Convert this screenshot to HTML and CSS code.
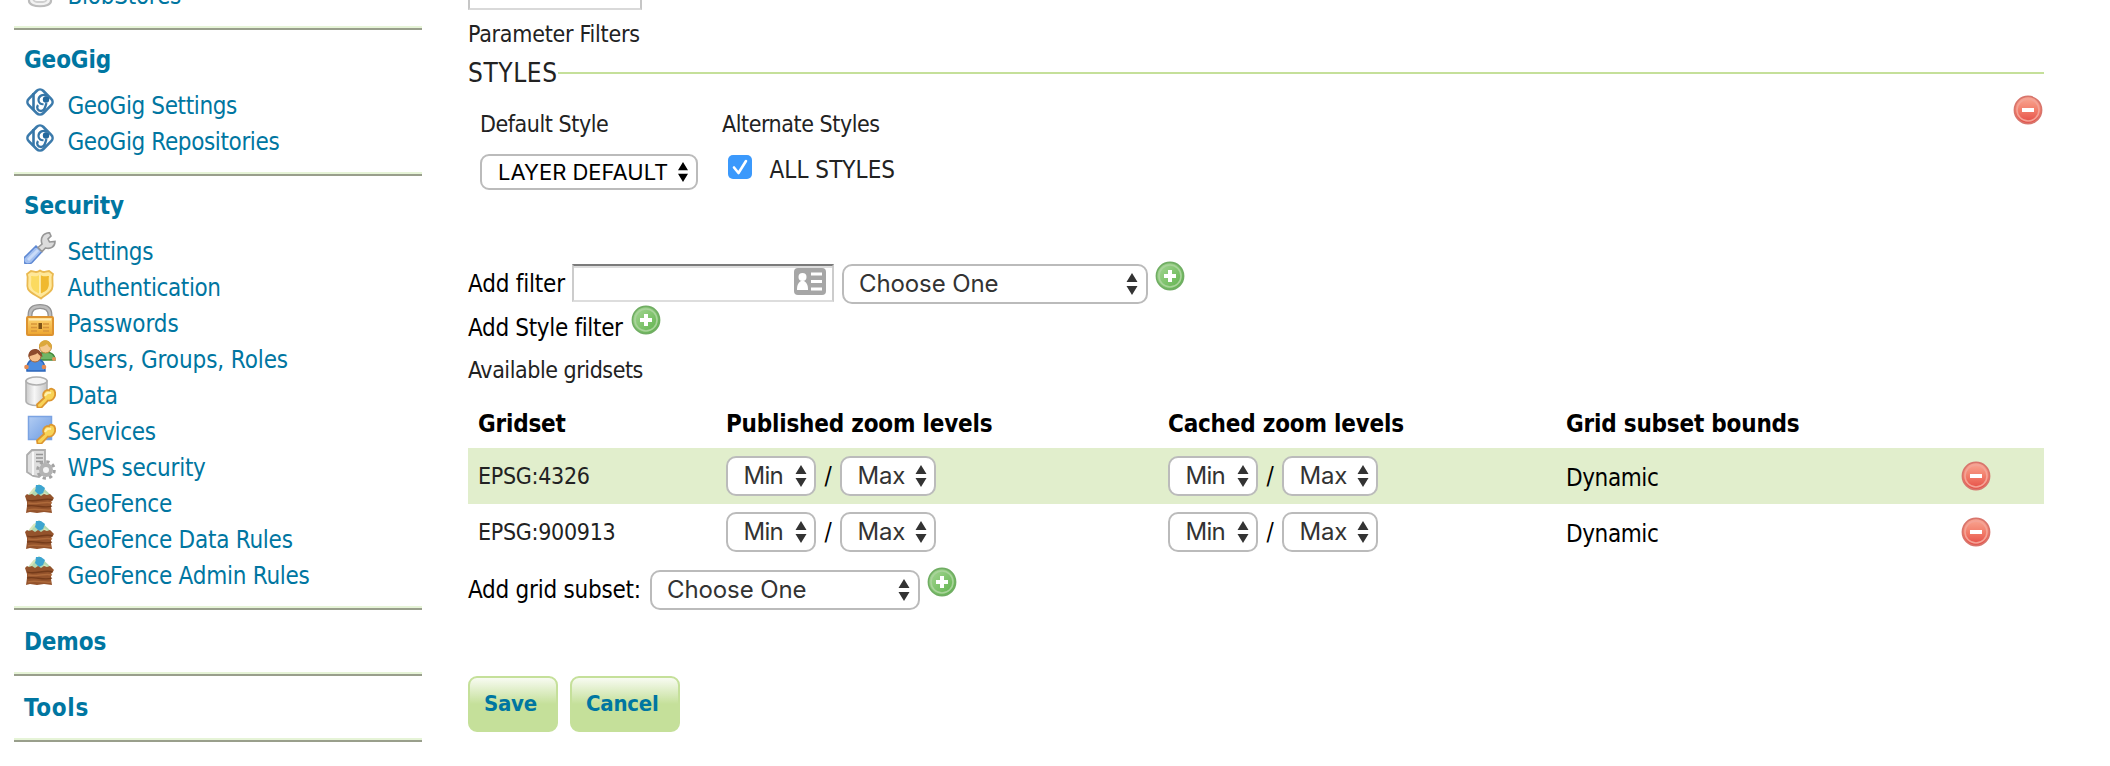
FILE: index.html
```
<!DOCTYPE html>
<html lang="en">
<head>
<meta charset="utf-8">
<title>GeoServer: Edit Layer</title>
<link rel="stylesheet" href="styles.css">
</head>
<body>
<svg class="defs" width="0" height="0" aria-hidden="true">
  <defs>
    <linearGradient id="gRed" x1="0" y1="0" x2="0" y2="1"><stop offset="0" stop-color="#f9a995"/><stop offset=".5" stop-color="#f27e6b"/><stop offset="1" stop-color="#e44a44"/></linearGradient>
    <linearGradient id="gGreen" x1="0" y1="0" x2="1" y2="1"><stop offset="0" stop-color="#a9d998"/><stop offset="1" stop-color="#5bb048"/></linearGradient>
    <linearGradient id="gGold" x1="0" y1="0" x2="0" y2="1"><stop offset="0" stop-color="#fdd573"/><stop offset="1" stop-color="#eda52f"/></linearGradient>
    <linearGradient id="gGrey" x1="0" y1="0" x2="1" y2="0"><stop offset="0" stop-color="#c9c9c9"/><stop offset=".4" stop-color="#f7f7f7"/><stop offset="1" stop-color="#c4c4c4"/></linearGradient>
    <linearGradient id="gBlue" x1="0" y1="0" x2="1" y2="1"><stop offset="0" stop-color="#b3cdf3"/><stop offset="1" stop-color="#6c9be2"/></linearGradient>
    <symbol id="minus" viewBox="0 0 32 32"><circle cx="16" cy="16" r="13.6" fill="url(#gRed)" stroke="#d8756c" stroke-width="1.6"/><circle cx="16" cy="16" r="11" fill="none" stroke="#f4a396" stroke-width="1.6"/><rect x="10" y="14" width="12" height="4" fill="#fff"/></symbol>
    <symbol id="plus" viewBox="0 0 32 32"><circle cx="16" cy="16" r="13.6" fill="url(#gGreen)" stroke="#70ad63" stroke-width="1.6"/><circle cx="16" cy="16" r="11" fill="none" stroke="#a9d39b" stroke-width="1.6"/><path d="M10 14h4v-4h4v4h4v4h-4v4h-4v-4h-4z" fill="#fff"/></symbol>
    <symbol id="geogig" viewBox="0 0 32 32"><rect x="5.800" y="5.800" width="20.400" height="20.400" rx="4.500" transform="rotate(45 16 16)" fill="#fff" stroke="#3b7aab" stroke-width="2.600"/><path d="M9.500 7v17" fill="none" stroke="#3575a7" stroke-width="2.600"/><path d="M23 10c-3.500-2.500-8.500-.5-8.500 4 0 3 2.500 4.500 5 4.200" fill="none" stroke="#3575a7" stroke-width="2.200"/><path d="M14 19c-2 3 0 6 3 6 4 0 4-4 5.500-8" fill="none" stroke="#3575a7" stroke-width="2.300"/><circle cx="22" cy="13.500" r="3.200" fill="#24689d"/></symbol>
    <symbol id="wrench" viewBox="0 0 32 32"><path d="M0 26 12 14l6 5.500L8 30.500c-3 2.500-10 2.500-8-4.500z" fill="#a3c0f0" stroke="#5f89d3" stroke-width="1.600"/><path d="M4 28 14 18" stroke="#c9dbf8" stroke-width="3"/><path d="M14 15.500l4-3.500c-2-6 1-11 7.500-11.300L27 4l-3 3 1.500 3 5.500-.5c0 5-4 8-9.500 6.500L18 19.500z" fill="#dcdcdc" stroke="#979797" stroke-width="1.600"/></symbol>
    <symbol id="shield" viewBox="0 0 32 32"><path d="M16 2.500c2 1.500 4 2 6 1l3-.5 4 3c-2 5 1 10-1 15-2 4-7 6-11 9.500C12 27 6 25 4 21 2 16 5 11 3 6l4-3 3 .5c2 1 4 .5 6-1z" fill="#ffe89a" stroke="#eab950" stroke-width="1.800"/><path d="M16 7c4 2 5 1 9 1-1 5 1 8-1 12-1 3-5 4-8 6z" fill="#f0b92f"/><path d="M16 7c-4 2-5 1-9 1 1 5-1 8 1 12 1 3 5 4 8 6z" fill="#fbda60"/><path d="M16 7v19" stroke="#fff3c0" stroke-width="1.500"/></symbol>
    <symbol id="lock" viewBox="0 0 32 32"><path d="M6 15v-4C6 5 10 2.500 16 2.500S26 5 26 11v4" fill="none" stroke="#929292" stroke-width="5"/><path d="M6 15v-4C6 5 10 2.500 16 2.500S26 5 26 11v4" fill="none" stroke="#bdbdbd" stroke-width="2.400"/><rect x="3" y="13" width="26" height="18" rx="1" fill="url(#gGold)" stroke="#dd9330" stroke-width="2"/><path d="M5 15.500h22" stroke="#ffebb5" stroke-width="2"/><path d="M7 20h6M7 23.500h6M7 27h6M19 20h6M19 23.500h6M19 27h6" stroke="#d8953a" stroke-width="1.500"/><rect x="14.500" y="19" width="3.500" height="6" fill="#7e5318"/></symbol>
    <symbol id="users" viewBox="0 0 32 32"><path d="M14 20c0-6 4-8 8-8s9 2 9 8z" fill="#6fb565" stroke="#40883a" stroke-width="1.500"/><circle cx="21.500" cy="7" r="6" fill="#f6c98e" stroke="#c08839"/><path d="M15 7C15-2 28-2 28 8c-3 0-4-3-5-4-2 2-5 3-8 3z" fill="#dca83b"/><circle cx="30" cy="19" r="2" fill="#e5955a"/><path d="M3 31c-1-9 4-12 9-12s9 3 9 12z" fill="#4c8de0" stroke="#2b66bb" stroke-width="1.500"/><circle cx="11" cy="16" r="6" fill="#f6c08b" stroke="#a5653a"/><path d="M4.500 17c-1-10 13-11 14 0-3-1-4-3-5-4-2 2-6 2-9 4z" fill="#8e4b2d"/><circle cx="2.500" cy="27" r="2.300" fill="#e58a50"/><circle cx="20" cy="27" r="2.300" fill="#e58a50"/></symbol>
    <symbol id="key" viewBox="0 0 32 32"><path d="M13 28.500 20 22c-2-4 0-7 3-8l2 .5c0-3 6-2 6 2 1 5-3 9-7 8l-6.500 7-4 .2z" fill="#f8d357" stroke="#dc9630" stroke-width="1.800"/><path d="M21 20c1-3 3-4 6-3" fill="none" stroke="#fff0ac" stroke-width="2"/></symbol>
    <symbol id="data" viewBox="0 0 32 32"><path d="M2 5v20c0 6 21 6 21 0V5z" fill="url(#gGrey)" stroke="#b0b0b0" stroke-width="1.600"/><ellipse cx="12.500" cy="5" rx="10.500" ry="4" fill="#f4f4f4" stroke="#b0b0b0" stroke-width="1.600"/><use href="#key"/></symbol>
    <symbol id="services" viewBox="0 0 32 32"><rect x="4.500" y="4.500" width="23" height="23" fill="url(#gBlue)" stroke="#7ba3e2" stroke-width="1.500"/><use href="#key"/></symbol>
    <symbol id="wps" viewBox="0 0 32 32"><path d="M3 7 8 2h13v22L15 29 9 28 3 24z" fill="#dedede" stroke="#adadad" stroke-width="1.800"/><path d="M9 4v23" stroke="#f8f8f8" stroke-width="2"/><path d="M12 6.500h7M12 10h7M12 13.500h7" stroke="#959595" stroke-width="1.600"/><circle cx="22" cy="22" r="8.300" fill="none" stroke="#a3a3a3" stroke-width="3" stroke-dasharray="3.260"/><circle cx="22" cy="22" r="5" fill="#f4f4f4" stroke="#b3b3b3" stroke-width="4"/></symbol>
    <symbol id="fence" viewBox="0 0 32 32"><path d="M15 0 28 12H3z" fill="#b3d8b0"/><path d="M12 1h5l4 3-2 5-4 2-4-4z" fill="#3da5d0"/><path d="M6 10 11 4M20 9l3 2" stroke="#d7e6bb" stroke-width="2"/><path d="M1 12l2-2 2 1 3-1 3 2 3-2 3 2 3-2 3 1 3-1 4 4-3 4v5l1 6-8-1-7 1-7-1-4 1 1-7V18z" fill="#94532c"/><path d="M3 16c8 3 18-3 26 0M3 22c8-2 17 3 25 0" fill="none" stroke="#743b1a" stroke-width="1.300"/><path d="M4 19c8 2 17-2 24 0M4 26c8-2 17 1 23 0" fill="none" stroke="#ae6a3b" stroke-width="1.500"/></symbol>
    <symbol id="blob" viewBox="0 0 32 32"><path d="M5 5v20c0 7 22 7 22 0V5z" fill="#f2f2f2" stroke="#bcbcbc" stroke-width="2.200"/><rect x="9" y="14" width="14" height="12" rx="4" fill="#fafafa" stroke="#cfcfcf" stroke-width="1.800"/></symbol>
    <symbol id="card" viewBox="0 0 32 27"><rect width="32" height="27" rx="4" fill="#a6a6a6"/><circle cx="8.500" cy="9" r="4" fill="#fff"/><path d="M3 22c0-5 1-7 4-9h3c3 2 4 4 4 9z" fill="#fff"/><path d="M17 6h11M17 13.500h11M17 21h11" stroke="#fff" stroke-width="3"/></symbol>
    <symbol id="arrows" viewBox="0 0 12 22"><path d="M6 0l5.500 9H.5zM6 22l5.500-9H.5z" fill="currentColor"/></symbol>
  </defs>
</svg>
<div class="page">
  <nav class="sidebar">
    <section class="group group-cut">
      <ul class="links"><li><svg class="icon"><use href="#blob"/></svg><a>BlobStores</a></li></ul>
    </section>
    <section class="group">
      <h3>GeoGig</h3>
      <ul class="links">
        <li><svg class="icon"><use href="#geogig"/></svg><a class="narrow">GeoGig Settings</a></li>
        <li><svg class="icon"><use href="#geogig"/></svg><a class="narrow">GeoGig Repositories</a></li>
      </ul>
    </section>
    <section class="group">
      <h3>Security</h3>
      <ul class="links">
        <li><svg class="icon"><use href="#wrench"/></svg><a class="narrow">Settings</a></li>
        <li><svg class="icon"><use href="#shield"/></svg><a class="narrow">Authentication</a></li>
        <li><svg class="icon"><use href="#lock"/></svg><a class="loose">Passwords</a></li>
        <li><svg class="icon"><use href="#users"/></svg><a class="loose">Users, Groups, Roles</a></li>
        <li><svg class="icon"><use href="#data"/></svg><a class="narrow">Data</a></li>
        <li><svg class="icon"><use href="#services"/></svg><a class="narrow">Services</a></li>
        <li><svg class="icon"><use href="#wps"/></svg><a>WPS security</a></li>
        <li><svg class="icon"><use href="#fence"/></svg><a>GeoFence</a></li>
        <li><svg class="icon"><use href="#fence"/></svg><a>GeoFence Data Rules</a></li>
        <li><svg class="icon"><use href="#fence"/></svg><a>GeoFence Admin Rules</a></li>
      </ul>
    </section>
    <section class="group group-single"><h3>Demos</h3></section>
    <section class="group group-single"><h3 class="wide">Tools</h3></section>
  </nav>

  <main class="content">
    <div class="input-cut"></div>
    <div class="param-label">Parameter Filters</div>
    <div class="legend"><span>STYLES</span><i></i></div>
    <div class="styles">
      <div class="style-default">
        <div class="label">Default Style</div>
        <div class="select select-small"><span>LAYER DEFAULT</span><svg><use href="#arrows"/></svg></div>
      </div>
      <div class="style-alt">
        <div class="label">Alternate Styles</div>
        <div class="check"><svg viewBox="0 0 24 24"><rect width="24" height="24" rx="5" fill="#3b99fc"/><path d="M6 12.500l4.500 5.500L18 6" fill="none" stroke="#fff" stroke-width="2.600" stroke-linecap="round" stroke-linejoin="round"/></svg><span>ALL STYLES</span></div>
      </div>
      <svg class="icon remove"><use href="#minus"/></svg>
    </div>
    <div class="row filter-row">
      <span class="text filter-label">Add filter</span>
      <div class="input"><svg><use href="#card"/></svg></div>
      <div class="select select-filter"><span>Choose One</span><svg><use href="#arrows"/></svg></div>
      <svg class="icon add"><use href="#plus"/></svg>
    </div>
    <div class="row style-row">
      <span class="text style-label">Add Style filter</span>
      <svg class="icon add"><use href="#plus"/></svg>
    </div>
    <div class="avail">Available gridsets</div>
    <div class="grid head"><span>Gridset</span><span>Published zoom levels</span><span>Cached zoom levels</span><span>Grid subset bounds</span><span></span></div>
    <div class="grid odd">
      <span class="name">EPSG:4326</span>
      <div class="zoom"><div class="select min"><span>Min</span><svg><use href="#arrows"/></svg></div><b>/</b><div class="select max"><span>Max</span><svg><use href="#arrows"/></svg></div></div>
      <div class="zoom"><div class="select min"><span>Min</span><svg><use href="#arrows"/></svg></div><b>/</b><div class="select max"><span>Max</span><svg><use href="#arrows"/></svg></div></div>
      <span class="bounds">Dynamic</span>
      <svg class="icon"><use href="#minus"/></svg>
    </div>
    <div class="grid">
      <span class="name">EPSG:900913</span>
      <div class="zoom"><div class="select min"><span>Min</span><svg><use href="#arrows"/></svg></div><b>/</b><div class="select max"><span>Max</span><svg><use href="#arrows"/></svg></div></div>
      <div class="zoom"><div class="select min"><span>Min</span><svg><use href="#arrows"/></svg></div><b>/</b><div class="select max"><span>Max</span><svg><use href="#arrows"/></svg></div></div>
      <span class="bounds">Dynamic</span>
      <svg class="icon"><use href="#minus"/></svg>
    </div>
    <div class="row subset-row">
      <span class="text subset-label">Add grid subset:</span>
      <div class="select select-subset"><span>Choose One</span><svg><use href="#arrows"/></svg></div>
      <svg class="icon add"><use href="#plus"/></svg>
    </div>
    <div class="buttons"><a class="button save">Save</a><a class="button cancel">Cancel</a></div>
  </main>
</div>
</body>
</html>
```
FILE: styles.css
```
* { box-sizing: border-box; }
html, body { margin: 0; padding: 0; }
body {
  height: 766px;
  overflow: hidden;
  background: #fff;
  color: #000;
  font: 24px/40px "DejaVu Sans Condensed", "DejaVu Sans", sans-serif;
  letter-spacing: -0.25px;
  white-space: nowrap;
}
.defs { display: block; height: 0; }
svg { display: block; flex: none; }
.icon { width: 32px; height: 32px; }
.page { display: flex; width: 2110px; height: 766px; }

/* sidebar */
.sidebar { width: 408px; margin-left: 14px; color: #0076a1; }
.group { height: 146px; padding: 0 10px; border-bottom: 2px solid #999f8c; box-shadow: inset 0 -2px #e6f4d7; }
.group-cut { display: flow-root; height: 30px; }
.group-cut .links { margin-top: -24px; }
.group:nth-child(3) { height: 434px; }
.group-single { height: 66px; }
h3 { margin: 0; padding-top: 10px; height: 56px; font-size: 24px; line-height: 40px; letter-spacing: -0.12px; }
.group-single h3 { padding-top: 12px; }
.group-single h3.wide { letter-spacing: 0.7px; }
.links { list-style: none; margin: 0; padding: 0; }
.links li { display: flex; height: 36px; gap: 11.500px; }
.links .narrow { letter-spacing: -0.38px; }
.links .loose { letter-spacing: -0.1px; }

/* content */
.content { width: 1576px; margin-left: 46px; }
.input-cut { width: 174px; height: 10px; border: 2px solid #c6c6c6; border-top: 0; border-bottom-color: #d9d9d9; }
.param-label, .label, .avail { font-size: 23px; letter-spacing: -0.45px; color: #222; }
.param-label { height: 48px; line-height: 48px; letter-spacing: -0.25px; }
.legend { display: flex; align-items: center; height: 30px; font-size: 26px; line-height: 30px; letter-spacing: 0.6px; color: #222; }
.legend span { width: 90px; }
.legend i { flex: 1; height: 2px; background: #c5e09a; }
.styles { display: flex; height: 176px; }
.label { height: 36px; margin-top: 18px; line-height: 36px; }
.style-default { width: 218px; margin-left: 12px; }
.style-alt { margin-left: 24px; }
.check { display: flex; gap: 17.500px; padding: 13px 0 0 6px; color: #222; line-height: 30px; letter-spacing: 0.05px; }
.check svg { width: 24px; height: 24px; }
.remove { margin: 6px 0 0 auto; }

.select {
  display: flex; align-items: center; justify-content: space-between;
  height: 40px; padding: 0 8px 0 15px;
  border: 2px solid #bbb; border-radius: 10px; background: #fff; color: #333;
  font: 24px/36px Inter, sans-serif; letter-spacing: -0.1px;
}
.select svg { width: 12px; height: 22px; }
.select-small { height: 36px; margin-top: 12px; padding: 0 7px 0 16px; border-radius: 9px; color: #000; font-size: 22px; line-height: 32px; letter-spacing: 0; }
.select-small svg { height: 20px; }

.row { display: flex; height: 40px; }
.filter-label { width: 104px; letter-spacing: -0.2px; }
.input { display: flex; justify-content: flex-end; width: 262px; height: 38px; padding: 2px 6px 0 0; border: 2px solid #ccc; border-top-color: #7b7b7b; border-bottom-color: #ddd; box-shadow: inset 0 2px #ddd; }
.input svg { width: 32px; height: 27px; }
.select-filter { width: 306px; margin-left: 8px; }
.filter-row .add { margin: -4px 0 0 6px; }
.style-row { margin-top: 4px; }
.style-label { width: 162px; letter-spacing: -0.33px; }
.style-row .add { margin-top: -4px; }
.avail { height: 36px; margin-top: 4px; line-height: 36px; }

.grid { display: grid; grid-template-columns: 248px 442px 398px 394px 84px; align-items: center; height: 56px; padding-left: 10px; }
.head { height: 40px; margin: 16px 0 4px; font-weight: bold; letter-spacing: -0.2px; }
.odd { background: #e1eecc; }
.name { font-size: 23px; letter-spacing: -0.3px; color: #222; }
.bounds { padding-top: 3px; letter-spacing: -0.4px; }
.zoom { display: flex; align-items: center; }
.zoom b { width: 24px; font-weight: normal; text-align: center; }
.min { width: 90px; padding: 0 7px 0 15.500px; letter-spacing: -0.7px; }
.max { width: 96px; padding: 0 7px 0 15.500px; letter-spacing: -0.2px; }

.subset-row { margin-top: 10px; }
.subset-label { width: 182px; }
.select-subset { width: 270px; }
.subset-row .add { margin: -4px 0 0 6px; }
.buttons { display: flex; gap: 12px; margin-top: 66px; }
.button {
  height: 56px; padding-left: 14px; border: 2px solid #c5e09a; border-radius: 9px;
  background: linear-gradient(#f8fbf2, #c5e09a 26px);
  color: #0076a1; font-size: 22px; font-weight: bold; line-height: 52px; letter-spacing: -0.25px;
}
.save { width: 90px; }
.cancel { width: 110px; }
```
